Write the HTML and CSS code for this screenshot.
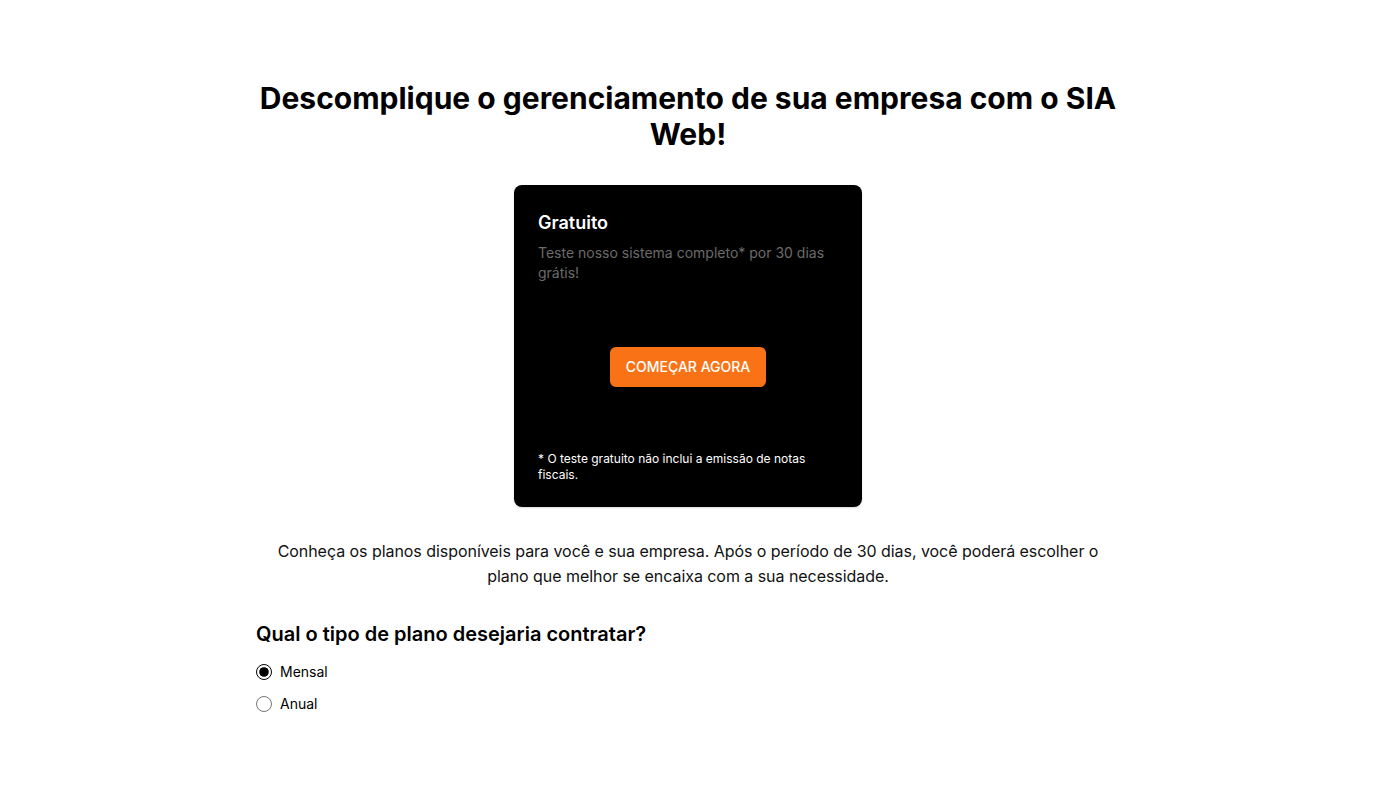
FILE: index.html
```html
<!DOCTYPE html>
<html lang="pt-BR">
<head>
<meta charset="utf-8">
<title>SIA Web</title>
<link rel="stylesheet" href="styles.css">
</head>
<body>
<main class="page">
  <h1 class="title">Descomplique o gerenciamento de sua empresa com o SIA Web!</h1>
  <section class="card">
    <h2 class="card-title">Gratuito</h2>
    <p class="card-desc">Teste nosso sistema completo* por 30 dias grátis!</p>
    <div class="card-action">
      <button class="btn" type="button">COMEÇAR AGORA</button>
    </div>
    <p class="card-note">* O teste gratuito não inclui a emissão de notas fiscais.</p>
  </section>
  <p class="intro">Conheça os planos disponíveis para você e sua empresa. Após o período de 30 dias, você poderá escolher o plano que melhor se encaixa com a sua necessidade.</p>
  <h3 class="question">Qual o tipo de plano desejaria contratar?</h3>
  <div class="options">
    <label class="option"><input type="radio" name="plano" checked><span>Mensal</span></label>
    <label class="option"><input type="radio" name="plano"><span>Anual</span></label>
  </div>
</main>
</body>
</html>
```

FILE: styles.css
```css
* { box-sizing: border-box; }
html, body { margin: 0; padding: 0; background: #fff; }
body {
  font-family: Inter, "Noto Sans", sans-serif;
  color: #000;
}
.page {
  max-width: 896px;
  margin: 0 auto;
  padding: 80px 16px 40px;
  display: flex;
  flex-direction: column;
}
.title {
  margin: 0;
  font-size: 30px;
  line-height: 36px;
  font-weight: 700;
  text-align: center;
}
.card {
  align-self: center;
  width: 348px;
  height: 322px;
  margin-top: 33px;
  background: #000;
  border-radius: 8px;
  padding: 24px;
  display: flex;
  flex-direction: column;
  color: #fff;
  box-shadow: 0 1px 2px rgba(0,0,0,0.15);
}
.card-title {
  margin: 0;
  font-size: 18px;
  line-height: 28px;
  font-weight: 600;
}
.card-desc {
  margin: 6px 0 0;
  font-size: 14px;
  line-height: 20px;
  color: #6b6b6b;
}
.card-action {
  flex: 1;
  display: flex;
  align-items: center;
  justify-content: center;
}
.btn {
  font-family: inherit;
  font-size: 14px;
  font-weight: 500;
  line-height: 20px;
  color: #fff;
  background: #f97316;
  border: none;
  border-radius: 6px;
  padding: 10px 16px;
  white-space: nowrap;
  height: 40px;
  margin-top: 3px;
  margin-bottom: 3px;
}
.card-note {
  margin: 0;
  font-size: 12px;
  line-height: 16px;
}
.intro {
  margin: 32px 0 0;
  padding: 0 2px;
  font-size: 16px;
  line-height: 25px;
  text-align: center;
  color: #111;
  letter-spacing: -0.05px;
}
.question {
  margin: 31px 0 0;
  font-size: 20px;
  line-height: 28px;
  font-weight: 600;
}
.options {
  margin-top: 12px;
  display: flex;
  flex-direction: column;
  gap: 8px;
}
.option {
  display: flex;
  align-items: center;
  gap: 8px;
  font-size: 14px;
  line-height: 24px;
  font-weight: 400;
}
.option input {
  margin: 0;
  width: 16px;
  height: 16px;
  accent-color: #000;
}
```
